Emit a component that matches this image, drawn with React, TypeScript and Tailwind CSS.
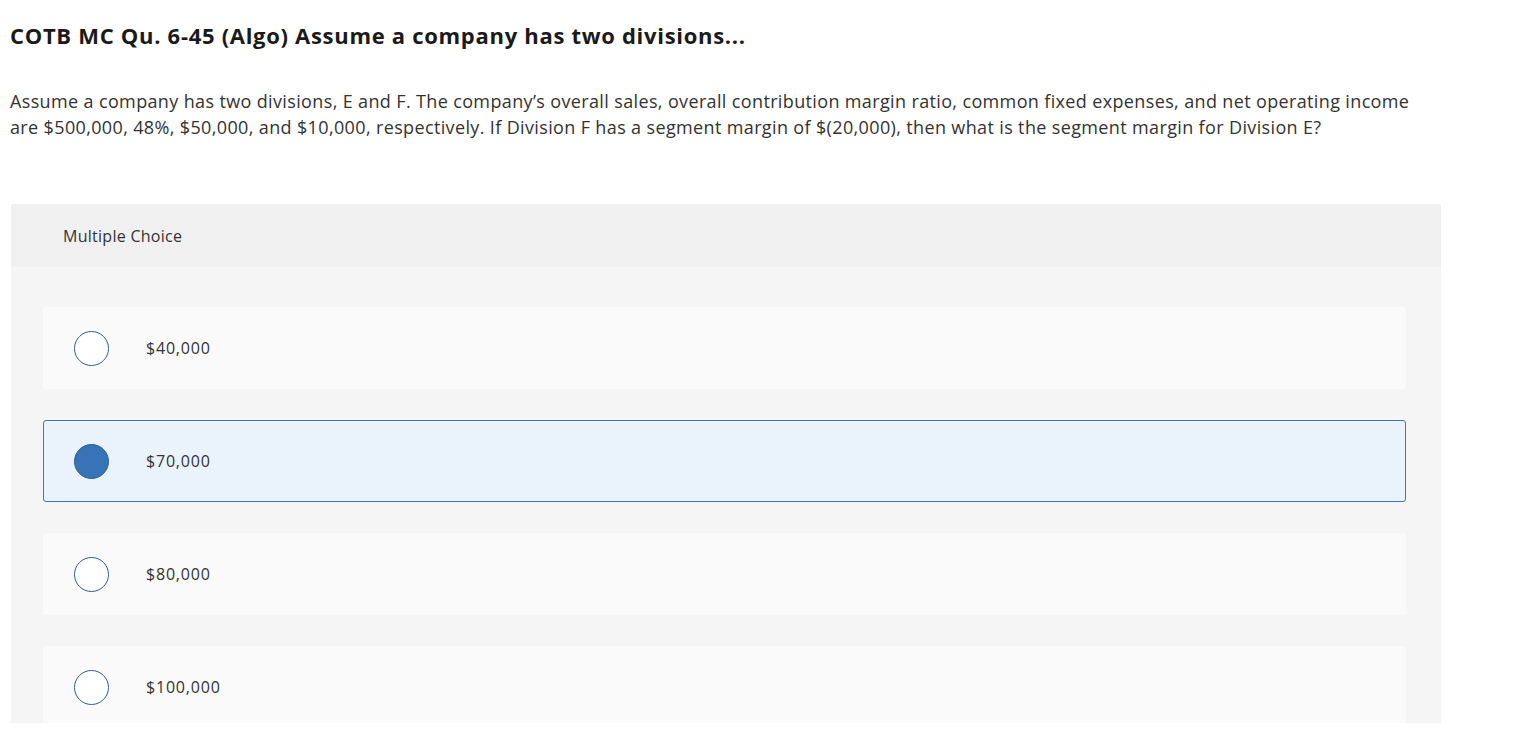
const options = [
  { label: "$40,000", selected: false },
  { label: "$70,000", selected: true },
  { label: "$80,000", selected: false },
  { label: "$100,000", selected: false },
];

function Radio({ checked }: { checked: boolean }) {
  return checked ? (
    <span className="block h-[35px] w-[35px] shrink-0 rounded-full border border-[#2d6099] bg-[#3873b7]" />
  ) : (
    <span className="block h-[35px] w-[35px] shrink-0 rounded-full border border-[#2f5f8f] bg-white" />
  );
}

export default function App() {
  return (
    <div className="h-[723px] overflow-hidden bg-white font-['Open_Sans',sans-serif] text-[#333]">
      <div className="pl-[10px] pt-[22px]">
        <h1 className="text-[22px] font-bold leading-[26px] tracking-[0.7px] text-[#1a1a1a]">
          COTB MC Qu. 6-45 (Algo) Assume a company has two divisions...
        </h1>
        <p className="mt-[40px] w-[1420px] text-[18px] leading-[26px] tracking-[0.36px] text-[#333]">
          Assume a company has two divisions, E and F. The company’s overall sales, overall contribution margin
          ratio, common fixed expenses, and net operating income are $500,000, 48%, $50,000, and $10,000,
          respectively. If Division F has a segment margin of $(20,000), then what is the segment margin for
          Division E?
        </p>
      </div>

      <div className="ml-[11px] mt-[64px] w-[1430px] rounded-t-[3px] bg-[#f5f5f5]">
        <div className="flex h-[63px] items-center rounded-t-[3px] bg-[#f0f0f0] pl-[52px] text-[16px] tracking-[0.27px]">
          Multiple Choice
        </div>
        <div className="flex flex-col gap-[31px] px-[32px] pb-[40px] pt-[40px]">
          {options.map((o) => (
            <div
              key={o.label}
              className={
                o.selected
                  ? "flex h-[82px] w-[1363px] items-center gap-[37px] rounded-[3px] border border-[#3a77bf] bg-[#eaf2fb] pl-[30px]"
                  : "flex h-[82px] w-[1363px] items-center gap-[37px] rounded-[3px] border border-transparent bg-[#fafafa] pl-[30px]"
              }
            >
              <Radio checked={o.selected} />
              <span className="text-[16px] tracking-[0.8px]">{o.label}</span>
            </div>
          ))}
        </div>
      </div>
    </div>
  );
}
